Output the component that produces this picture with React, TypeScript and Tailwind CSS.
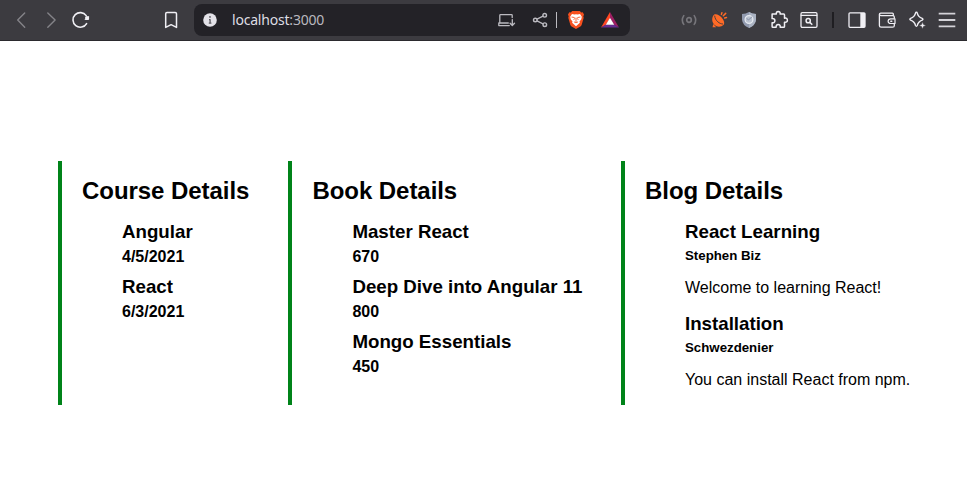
import type { ReactNode } from "react";

function Icon({ children, className = "" }: { children: ReactNode; className?: string }) {
  return (
    <span className={`flex h-10 w-[30px] shrink-0 items-center justify-center ${className}`}>
      <svg
        width="20"
        height="20"
        viewBox="0 0 20 20"
        fill="none"
        stroke="currentColor"
        strokeWidth="1.4"
        strokeLinecap="round"
        strokeLinejoin="round"
      >
        {children}
      </svg>
    </span>
  );
}

function Toolbar() {
  return (
    <header className="flex h-[41px] items-start border-b border-[#2b2a2e] bg-[#3c3b40] pl-1.5 text-[#f0eff4]">
      <Icon className="text-[#848388]">
        <path d="M13.7 3 6.7 10l7 7.3" />
      </Icon>
      <Icon className="text-[#848388]">
        <path d="M6.8 3 14.1 10l-7.3 7.3" />
      </Icon>
      <Icon>
        <path d="M15.6 13.6A7.3 7.3 0 1 1 15.2 5.6" strokeWidth="1.6" />
        <circle cx="16" cy="8.1" r="2" fill="currentColor" stroke="none" />
        <path d="M17.6 6.5v3h-3.5" fill="currentColor" strokeWidth=".8" />
      </Icon>
      <Icon className="ml-[60px]">
        <path d="M4.7 17.4V3.8Q4.7 2.5 6 2.5h8.2q1.3 0 1.3 1.3v13.6L10.1 14.7z" strokeWidth="1.5" />
      </Icon>

      <div className="ml-2 mt-1 flex h-8 w-[436px] items-center rounded-lg bg-[#232227]">
        <span className="ml-px flex">
          <Icon>
            <circle cx="10" cy="10" r="6.8" fill="#e3e2e8" stroke="none" />
            <path d="M9 9.6h1.1v3.4M8.8 13.2h2.6" stroke="#5b5a60" strokeWidth="1.3" strokeLinecap="butt" />
            <circle cx="10" cy="6.9" r=".9" fill="#5b5a60" stroke="none" />
          </Icon>
        </span>
        <span className="ml-[7px] font-['Noto_Sans',sans-serif] text-[14px] leading-5 tracking-[-0.2px] text-[#dedde3]">
          localhost<span className="text-[#b9b8bf]">:3000</span>
        </span>
        <span className="ml-auto flex items-center text-[#bbbac0]">
          <Icon>
            <path d="M3.8 13V5.4q0-.7.7-.7h11q.7 0 .7.7V7.5M3.8 13h8.5M2.8 15.6h10.5M2.8 13v2.6M16.3 9.6v5.7M14.1 13.3l2.2 2.2 2.2-2.2" strokeWidth="1.3" />
          </Icon>
          <Icon className="ml-1">
            <circle cx="5.3" cy="10" r="1.8" />
            <circle cx="14.7" cy="5.3" r="1.8" />
            <circle cx="14.8" cy="14.7" r="1.8" />
            <path d="m7 9.1 6-3M7 10.9l6 3" strokeWidth="1.2" />
          </Icon>
          <span className="ml-px h-4 w-px bg-[#bbbac0]" />
          <Icon className="ml-1">
            <path d="M6.2 1h7.6l1.4 1.5 1.5-.2L18 4.5l-.7 2 .4 1.3-2 7q-.4 1.1-1.3 1.8L10 19l-4.4-2.4q-.9-.7-1.3-1.8l-2-7 .4-1.3L2 4.5l1.3-2.2 1.5.2z" fill="#f7501e" stroke="none" />
            <path d="m6 4.1 2.5.5L10 4.3l1.5.3 2.5-.5 1.8 2.6-.5 2.5-1.8 2.4.4 1.2-3.9 3.5-3.9-3.5.4-1.2-1.8-2.4-.5-2.5z" fill="#fff" stroke="none" />
            <path d="m5.9 7.1 2.4.4.4 1.1-.8 1M14.1 7.1l-2.4.4-.4 1.1.8 1M10 8v3.6M8.3 12l1.7.8 1.7-.8" stroke="#f7501e" strokeWidth=".85" />
          </Icon>
          <Icon className="ml-1 mr-[5px]">
            <path d="M10 2 1 17.6l5-2.8L10 8z" fill="#ff4724" stroke="none" />
            <path d="m10 2 9 15.6-5-2.8L10 8z" fill="#9e1f63" stroke="none" />
            <path d="M1 17.6h18l-5-3H6z" fill="#662d91" stroke="none" />
            <path d="m10 7.7 4.2 7.1H5.8z" fill="#fff" stroke="none" />
          </Icon>
        </span>
      </div>

      <div className="ml-auto mr-[5px] flex items-center">
        <Icon className="text-[#76757a]">
          <circle cx="10" cy="10" r="2.3" strokeWidth="1.7" />
          <path d="M4.8 5.6q-3 4.4 0 8.8M15.2 5.6q3 4.4 0 8.8" strokeWidth="1.6" />
        </Icon>
        <Icon className="text-[#ff6a26]">
          <path d="M5.2 4.6C7.2 3.5 10.6 5.2 12.6 7.5c2.2 2.4 3.4 5.7 2.1 7.3-2.4 2.4-6.6 2.7-9.4 0C2.6 12 2.5 7.2 5.2 4.6z" fill="currentColor" stroke="none" />
          <path d="M5.7 6.1c.2 2.2 1.4 4.2 3.1 5.7 1.6 1.4 3.3 2.1 4.8 2.2" stroke="#3c3b40" strokeWidth=".9" />
          <path d="m4.2 14-.6 3.2h3.6z" fill="currentColor" stroke="none" />
          <path d="m12.4 4.4.5-1.7M14.3 5.8l2.4-2.4M15.7 8l1.8-.5" strokeWidth="1.5" />
        </Icon>
        <Icon>
          <path d="M10 2q3 2 7 2.1v5.6q-.5 5.4-7 8.3-6.5-2.9-7-8.3V4.1Q7 4 10 2z" fill="#929bb0" stroke="none" />
          <path d="M10 2q3 2 7 2.1v5.6q-.5 5.4-7 8.3z" fill="#aab2c2" stroke="none" />
          <circle cx="10" cy="9.5" r="3.9" fill="#bac2d0" stroke="#e5e9f0" strokeWidth="1.3" />
          <path d="M12.8 7 9.7 9.8 8 8.8" stroke="#79849c" strokeWidth=".8" />
        </Icon>
        <Icon>
          <path d="M3.1 4.1h4.3q-.5-2.5 1.8-2.6 2.4.1 1.9 2.6h3.6q.8 0 .8.8v3.3q2.8-.5 2.9 2-.1 2.5-2.9 2v4.2q0 .8-.8.8h-3.5q.3-2.6-2-2.6t-2 2.6H3.9q-.8 0-.8-.8v-3.6q2.7.2 2.8-2.1-.1-2.2-2.8-2.1z" strokeWidth="1.5" />
        </Icon>
        <Icon>
          <rect x="2" y="2.7" width="16" height="14.6" rx="1.2" strokeWidth="1.3" />
          <path d="M2.3 5.4h15.4" strokeWidth="1.3" />
          <circle cx="9.2" cy="10.7" r="2.1" strokeWidth="1.5" />
          <path d="m11 12.5 1.8 1.8" strokeWidth="1.6" />
        </Icon>
        <span className="mx-2 h-4 w-0.5 bg-[#1f1e22]" />
        <Icon>
          <rect x="2" y="2.8" width="16" height="14.5" rx="1" strokeWidth="1.3" />
          <path d="M13.3 3H18v14h-4.7z" fill="currentColor" stroke="none" />
        </Icon>
        <Icon>
          <path d="M16.3 5.4V4q0-.9-.9-.9H3.8q-1.4 0-1.4 1.2v11.2q0 1.7 1.7 1.7h11.5q1.7 0 1.7-1.5V7q0-1.4-1.4-1.4H4Q2.5 5.6 2.4 4.3" strokeWidth="1.3" />
          <path d="M18 8.8h-4.3q-2.5.1-2.6 2.4.1 2.2 2.6 2.3H18z" fill="#3c3b40" strokeWidth="1.2" />
          <path d="M13.8 11.2h1" />
        </Icon>
        <Icon>
          <path d="M9.4 2.2q.7 0 .9.9.8 3.8 4.9 5.3 1.5.9 0 1.8-4 1.5-4.9 5.3-.9 1.6-1.8 0-.9-3.8-4.9-5.3-1.5-.9 0-1.8 4-1.5 4.9-5.3.2-.9.9-.9z" strokeWidth="1.4" />
          <path d="m15.5 11.8 1 2.6 2.6 1-2.6 1-1 2.6-1-2.6-2.6-1 2.6-1z" fill="currentColor" stroke="#3c3b40" strokeWidth=".5" />
        </Icon>
        <Icon className="text-[#d3d2d7]">
          <path d="M1.7 3.7h16.6M1.7 10h16.6M1.7 16.3h16.6" strokeWidth="1.8" strokeLinecap="butt" />
        </Icon>
      </div>
    </header>
  );
}

function Section({ title, className, children }: { title: string; className: string; children: ReactNode }) {
  return (
    <section className={`border-l-4 border-[#008319] pl-5 pt-4 ${className}`}>
      <h1 className="text-2xl/7 font-bold tracking-[-0.05px]">{title}</h1>
      <div className="mt-4 pl-10">{children}</div>
    </section>
  );
}

const courses = [
  { name: "Angular", date: "4/5/2021" },
  { name: "React", date: "6/3/2021" },
];

const books = [
  { name: "Master React", price: 670 },
  { name: "Deep Dive into Angular 11", price: 800 },
  { name: "Mongo Essentials", price: 450 },
];

const blogs = [
  { title: "React Learning", author: "Stephen Biz", text: "Welcome to learning React!" },
  { title: "Installation", author: "Schwezdenier", text: "You can install React from npm." },
];

function Item({ name, detail }: { name: string; detail: string | number }) {
  return (
    <div className="mb-2.5">
      <h3 className="text-[18.72px] leading-[22px] font-bold">{name}</h3>
      <h4 className="mt-[5px] text-[16px] leading-[18px] font-bold">{detail}</h4>
    </div>
  );
}

export default function App() {
  return (
    <div className="h-[483px] overflow-hidden bg-white font-['Liberation_Sans',Arial,sans-serif] whitespace-nowrap text-black">
      <Toolbar />
      <main className="mt-[120px] ml-[58px] flex h-[244px]">
        <Section title="Course Details" className="w-[230.4px]">
          {courses.map((c) => (
            <Item key={c.name} name={c.name} detail={c.date} />
          ))}
        </Section>
        <Section title="Book Details" className="w-[332.6px]">
          {books.map((b) => (
            <Item key={b.name} name={b.name} detail={b.price} />
          ))}
        </Section>
        <Section title="Blog Details" className="flex-1">
          {blogs.map((b) => (
            <article key={b.title} className="mb-4">
              <h3 className="text-[18.72px] leading-[22px] font-bold">{b.title}</h3>
              <h5 className="mt-[5px] text-[13.28px] leading-[15px] font-bold">{b.author}</h5>
              <p className="mt-4 text-[16px] leading-[18px]">{b.text}</p>
            </article>
          ))}
        </Section>
      </main>
    </div>
  );
}
